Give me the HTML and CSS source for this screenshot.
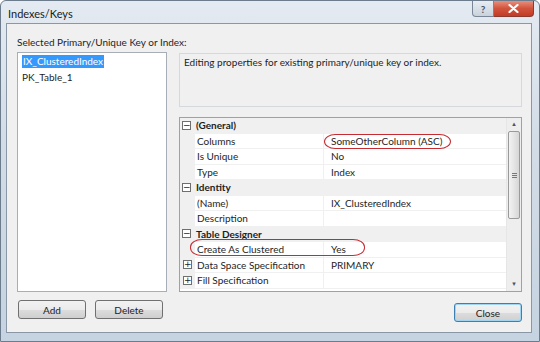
FILE: index.html
```html
<!DOCTYPE html>
<html lang="en">
    <head>
        <meta charset="UTF-8" />
        <title>Indexes/Keys</title>
        <link rel="stylesheet" href="styles.css">
    </head>
    <body>
        <div class="window">
            <div class="titlebar">
                <span class="title">Indexes/Keys</span>
                <div class="caption">
                    <div class="cap help">?</div>
                    <div class="cap close">
                        <svg width="11" height="9" viewBox="0 0 11 9">
                            <path d="M1.5 1 L9.5 8 M9.5 1 L1.5 8" stroke="#fff" stroke-width="2.2" stroke-linecap="round" />
                        </svg>
                    </div>
                </div>
            </div>
            <div class="client">
                <div class="label">Selected Primary/Unique Key or Index:</div>
                <div class="main">
                    <div class="left">
                        <div class="listbox">
                            <div class="item"><span class="selected">IX_ClusteredIndex</span></div>
                            <div class="item">PK_Table_1</div>
                        </div>
                        <div class="btnrow">
                            <div class="btn">Add</div>
                            <div class="btn">Delete</div>
                        </div>
                    </div>
                    <div class="right">
                        <div class="desc">Editing properties for existing primary/unique key or index.</div>
                        <div class="propgrid">
                            <div class="rows">
                                <div class="row cat"><span class="exp">&minus;</span><span class="name">(General)</span></div>
                                <div class="row"><span class="gut"></span><span class="name">Columns</span><span class="val">SomeOtherColumn (ASC)</span></div>
                                <div class="row"><span class="gut"></span><span class="name">Is Unique</span><span class="val">No</span></div>
                                <div class="row"><span class="gut"></span><span class="name">Type</span><span class="val">Index</span></div>
                                <div class="row cat"><span class="exp">&minus;</span><span class="name">Identity</span></div>
                                <div class="row"><span class="gut"></span><span class="name">(Name)</span><span class="val">IX_ClusteredIndex</span></div>
                                <div class="row"><span class="gut"></span><span class="name">Description</span><span class="val"></span></div>
                                <div class="row cat"><span class="exp">&minus;</span><span class="name">Table Designer</span></div>
                                <div class="row"><span class="gut"></span><span class="name">Create As Clustered</span><span class="val">Yes</span></div>
                                <div class="row"><span class="gut"><span class="exp">+</span></span><span class="name">Data Space Specification</span><span class="val">PRIMARY</span></div>
                                <div class="row"><span class="gut"><span class="exp">+</span></span><span class="name">Fill Specification</span><span class="val"></span></div>
                            </div>
                            <div class="scrollbar">
                                <div class="arrow">&#9652;</div>
                                <div class="thumb"><span class="grip"></span></div>
                                <div class="track"></div>
                                <div class="arrow">&#9662;</div>
                            </div>
                            <div class="mark mark1"></div>
                            <div class="mark mark2"></div>
                        </div>
                        <div class="closerow">
                            <div class="btn default">Close</div>
                        </div>
                    </div>
                </div>
            </div>
        </div>
    </body>
</html>
```

FILE: styles.css
```css
* {
    margin: 0;
    padding: 0;
    box-sizing: border-box;
}
body {
    width: 540px;
    height: 342px;
    overflow: hidden;
    font-family: Lato, "Open Sans", sans-serif;
    font-size: 10px;
    color: #1e1e1e;
}
.window {
    width: 540px;
    height: 342px;
    padding: 0 7px 8px 5px;
    display: flex;
    flex-direction: column;
    background: linear-gradient(180deg, #e4eaf1 0%, #d3dde8 40%, #c6d3e0 100%);
    border: 1px solid #6d7c8c;
    border-radius: 6px 6px 0 0;
}
.titlebar {
    height: 22px;
    display: flex;
    align-items: flex-start;
    justify-content: space-between;
}
.title {
    padding: 6px 0 0 2px;
    font-size: 11px;
    color: #1a1a1a;
}
.caption {
    display: flex;
    margin-right: -2px;
}
.cap {
    height: 16px;
    display: flex;
    align-items: center;
    justify-content: center;
    border: 1px solid #7a8696;
    border-top: none;
}
.help {
    width: 22px;
    border-radius: 0 0 0 4px;
    background: linear-gradient(180deg, #e8edf2, #c9d2dc);
    color: #4a5564;
    font-size: 10px;
    font-weight: bold;
}
.close {
    width: 40px;
    border-left: none;
    border-radius: 0 0 4px 0;
    background: linear-gradient(180deg, #e8907c 0%, #d2533b 50%, #c23b26 100%);
    border-color: #8a3a2e;
}
.client {
    flex: 1;
    background: #f0f0f0;
    border: 1px solid #8a97a6;
    padding: 11px 9px 10px 10px;
    display: flex;
    flex-direction: column;
}
.label {
    height: 17px;
    line-height: 14px;
}
.main {
    flex: 1;
    display: grid;
    grid-template-columns: 150px 1fr;
    column-gap: 12px;
}
.left {
    display: flex;
    flex-direction: column;
}
.listbox {
    height: 240px;
    background: #fff;
    border: 1px solid #a8aeb6;
    padding: 2px 0 0 4px;
}
.item {
    height: 13px;
    line-height: 13px;
    margin-bottom: 3px;
}
.selected {
    display: inline-block;
    background: #3399ff;
    color: #fff;
    padding: 0 1px;
}
.btnrow {
    display: flex;
    gap: 9px;
    margin-top: 8px;
    padding-left: 1px;
}
.btn {
    width: 68px;
    height: 19px;
    display: flex;
    align-items: center;
    justify-content: center;
    border: 1px solid #707070;
    border-radius: 3px;
    background: linear-gradient(180deg, #f2f2f2 0%, #ebebeb 50%, #dddddd 51%, #cfcfcf 100%);
}
.btn.default {
    border-color: #3c7fb1;
    box-shadow: inset 0 0 0 1px #9fd4f2;
}
.right {
    display: flex;
    flex-direction: column;
}
.desc {
    height: 54px;
    margin-top: 1px;
    border: 1px solid #d5d9de;
    padding: 2px 4px;
    line-height: 13px;
}
.propgrid {
    position: relative;
    height: 175px;
    margin-top: 10px;
    border: 1px solid #9aa2ab;
    background: #fff;
    display: flex;
}
.rows {
    flex: 1;
}
.row {
    height: 15.5px;
    display: flex;
    align-items: center;
    border-bottom: 1px solid #f0f0f0;
}
.row .gut {
    width: 15px;
    height: 100%;
    background: #f0f0f0;
    display: flex;
    align-items: center;
    justify-content: center;
}
.row .name {
    width: 129px;
    padding-left: 2px;
    height: 100%;
    display: flex;
    align-items: center;
    border-right: 1px solid #f0f0f0;
}
.row .val {
    padding-left: 7px;
}
.row.cat {
    background: #f0f0f0;
}
.row.cat .name {
    font-weight: bold;
    border-right: none;
    width: auto;
}
.exp {
    width: 9px;
    height: 9px;
    margin: 0 3px 0 2px;
    border: 1px solid #6f6f6f;
    background: #fff;
    font-size: 9px;
    line-height: 7px;
    text-align: center;
    font-family: "DejaVu Sans", sans-serif;
    color: #222;
}
.row .gut .exp {
    margin: 0;
}
.scrollbar {
    width: 15px;
    display: flex;
    flex-direction: column;
    background: #eeeeee;
    border-left: 1px solid #e6e6e6;
}
.arrow {
    height: 13px;
    font-size: 7px;
    line-height: 13px;
    text-align: center;
    color: #555;
    font-family: "DejaVu Sans", sans-serif;
}
.thumb {
    height: 88px;
    margin: 0 1px;
    border: 1px solid #9a9a9a;
    border-radius: 2px;
    background: linear-gradient(90deg, #f3f3f3, #e2e2e2 60%, #d6d6d6);
    display: flex;
    align-items: center;
    justify-content: center;
}
.grip {
    width: 5px;
    height: 5px;
    border-top: 1px solid #777;
    border-bottom: 1px solid #777;
    background: linear-gradient(180deg, transparent 1px, #777 1px, #777 2px, transparent 2px);
}
.track {
    flex: 1;
}
.mark {
    position: absolute;
    border: 1.5px solid #c62b32;
    border-radius: 12px / 8px;
}
.mark1 {
    left: 144px;
    top: 16px;
    width: 127px;
    height: 15px;
}
.mark2 {
    left: 10px;
    top: 121px;
    width: 175px;
    height: 17px;
}
.closerow {
    display: flex;
    justify-content: flex-end;
    margin-top: 11px;
}
```
